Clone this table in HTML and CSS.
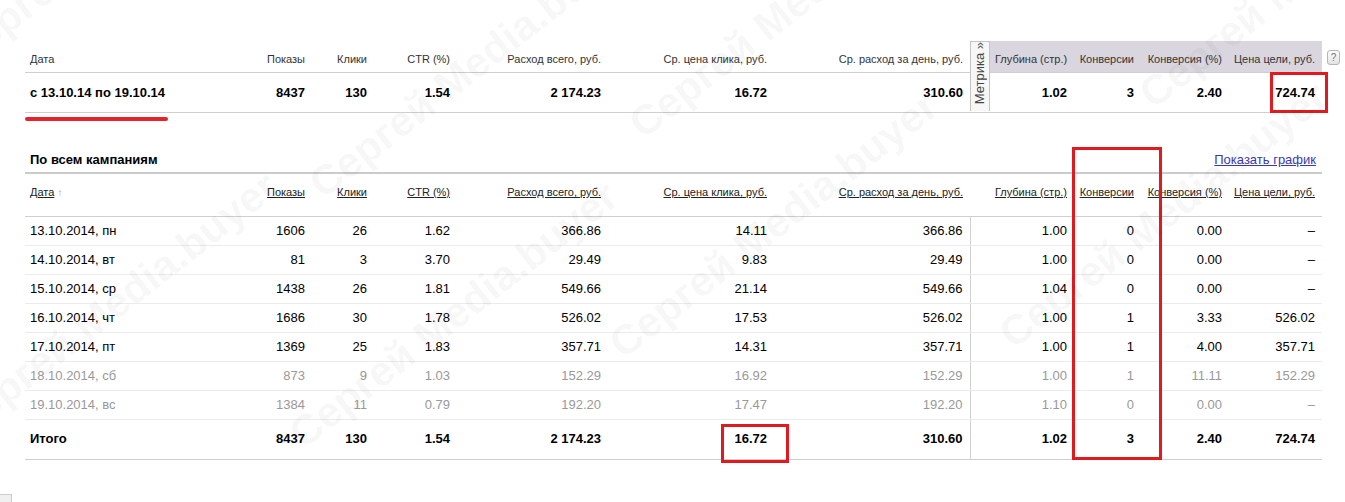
FILE: index.html
```html
<!DOCTYPE html>
<html lang="ru">
<head>
    <meta charset="UTF-8">
    <title>Статистика по дням</title>
    <link rel="stylesheet" href="styles.css">
</head>
<body>
<div class="page">
    <div class="summary">
        <table class="stat stat-top">
            <colgroup>
                <col class="c-date"><col class="c-shows"><col class="c-clicks"><col class="c-ctr">
                <col class="c-cost"><col class="c-cpc"><col class="c-daily"><col class="c-tab">
                <col class="c-depth-s"><col class="c-conv"><col class="c-convp"><col class="c-goal">
            </colgroup>
            <tbody>
            <tr class="head">
                <th class="left">Дата</th>
                <th>Показы</th>
                <th>Клики</th>
                <th>CTR (%)</th>
                <th>Расход всего, руб.</th>
                <th>Ср. цена клика, руб.</th>
                <th class="wide">Ср. расход за день, руб.</th>
                <td class="tab" rowspan="2"><div class="metrika"><span>Метрика »</span></div></td>
                <th class="metric">Глубина (стр.)</th>
                <th class="metric">Конверсии</th>
                <th class="metric">Конверсия (%)</th>
                <th class="metric last">Цена цели, руб.</th>
            </tr>
            <tr class="total">
                <td class="left">с 13.10.14 по 19.10.14</td>
                <td>8437</td>
                <td>130</td>
                <td>1.54</td>
                <td>2 174.23</td>
                <td>16.72</td>
                <td class="wide">310.60</td>
                <td>1.02</td>
                <td>3</td>
                <td>2.40</td>
                <td class="last">724.74</td>
            </tr>
            </tbody>
        </table>
        <span class="help">?</span>
    </div>
    <div class="underline"></div>

    <div class="section-head">
        <h2>По всем кампаниям</h2>
        <a href="#">Показать график</a>
    </div>

    <table class="stat stat-days">
        <colgroup>
            <col class="c-date"><col class="c-shows"><col class="c-clicks"><col class="c-ctr">
            <col class="c-cost"><col class="c-cpc"><col class="c-daily"><col class="c-depth">
            <col class="c-conv"><col class="c-convp"><col class="c-goal">
        </colgroup>
        <thead>
        <tr>
            <th class="left"><a href="#">Дата</a> <span class="sort">↑</span></th>
            <th><a href="#">Показы</a></th>
            <th><a href="#">Клики</a></th>
            <th><a href="#">CTR (%)</a></th>
            <th><a href="#">Расход всего, руб.</a></th>
            <th><a href="#">Ср. цена клика, руб.</a></th>
            <th class="wide"><a href="#">Ср. расход за день, руб.</a></th>
            <th><a href="#">Глубина (стр.)</a></th>
            <th><a href="#">Конверсии</a></th>
            <th><a href="#">Конверсия (%)</a></th>
            <th class="last"><a href="#">Цена цели, руб.</a></th>
        </tr>
        </thead>
        <tbody>
        <tr>
            <td class="left">13.10.2014, пн</td><td>1606</td><td>26</td><td>1.62</td><td>366.86</td><td>14.11</td>
            <td class="wide">366.86</td><td class="sep">1.00</td><td>0</td><td>0.00</td><td class="last">–</td>
        </tr>
        <tr>
            <td class="left">14.10.2014, вт</td><td>81</td><td>3</td><td>3.70</td><td>29.49</td><td>9.83</td>
            <td class="wide">29.49</td><td class="sep">1.00</td><td>0</td><td>0.00</td><td class="last">–</td>
        </tr>
        <tr>
            <td class="left">15.10.2014, ср</td><td>1438</td><td>26</td><td>1.81</td><td>549.66</td><td>21.14</td>
            <td class="wide">549.66</td><td class="sep">1.04</td><td>0</td><td>0.00</td><td class="last">–</td>
        </tr>
        <tr>
            <td class="left">16.10.2014, чт</td><td>1686</td><td>30</td><td>1.78</td><td>526.02</td><td>17.53</td>
            <td class="wide">526.02</td><td class="sep">1.00</td><td>1</td><td>3.33</td><td class="last">526.02</td>
        </tr>
        <tr>
            <td class="left">17.10.2014, пт</td><td>1369</td><td>25</td><td>1.83</td><td>357.71</td><td>14.31</td>
            <td class="wide">357.71</td><td class="sep">1.00</td><td>1</td><td>4.00</td><td class="last">357.71</td>
        </tr>
        <tr class="weekend">
            <td class="left">18.10.2014, сб</td><td>873</td><td>9</td><td>1.03</td><td>152.29</td><td>16.92</td>
            <td class="wide">152.29</td><td class="sep">1.00</td><td>1</td><td>11.11</td><td class="last">152.29</td>
        </tr>
        <tr class="weekend">
            <td class="left">19.10.2014, вс</td><td>1384</td><td>11</td><td>0.79</td><td>192.20</td><td>17.47</td>
            <td class="wide">192.20</td><td class="sep">1.10</td><td>0</td><td>0.00</td><td class="last">–</td>
        </tr>
        </tbody>
        <tfoot>
        <tr>
            <td class="left">Итого</td><td>8437</td><td>130</td><td>1.54</td><td>2 174.23</td><td>16.72</td>
            <td class="wide">310.60</td><td class="sep">1.02</td><td>3</td><td>2.40</td><td class="last">724.74</td>
        </tr>
        </tfoot>
    </table>
    <div class="corner"></div>

    <!-- пометки красным поверх таблицы -->
    <div class="mark mark-goal"></div>
    <div class="mark mark-conv"></div>
    <div class="mark mark-cpc"></div>

    <!-- водяной знак -->
    <div class="watermark">
        <span style="left:-60px;top:40px">Сергей Media.buyer</span>
        <span style="left:300px;top:170px">Сергей Media.buyer</span>
        <span style="left:620px;top:110px">Сергей Media.buyer</span>
        <span style="left:600px;top:330px">Сергей Media.buyer</span>
        <span style="left:990px;top:320px">Сергей Media.buyer</span>
        <span style="left:1130px;top:80px">Сергей Media.buyer</span>
        <span style="left:-60px;top:410px">Сергей Media.buyer</span>
        <span style="left:280px;top:420px">Сергей Media.buyer</span>
    </div>
</div>
</body>
</html>
```

FILE: styles.css
```css
* {
    margin: 0;
    padding: 0;
    box-sizing: border-box;
}

body {
    font-family: "Liberation Sans", Arial, sans-serif;
    font-size: 13px;
    color: #000;
    background: #fff;
    overflow: hidden;
}

.page {
    position: relative;
    width: 1345px;
    height: 502px;
    padding: 41px 0 0 25px;
    overflow: hidden;
}

/* общая таблица */
.stat {
    width: 1297px;
    border-collapse: collapse;
    table-layout: fixed;
}

.stat th,
.stat td {
    text-align: right;
    padding: 0 5px;
    white-space: nowrap;
}

.stat .left {
    text-align: left;
}

.stat .wide {
    padding-right: 7px;
}

.stat .last {
    padding-right: 7px;
}

.c-date { width: 215px; }
.c-shows { width: 70px; }
.c-clicks { width: 62px; }
.c-ctr { width: 83px; }
.c-cost { width: 151px; }
.c-cpc { width: 166px; }
.c-daily { width: 198px; }
.c-tab { width: 20px; }
.c-depth-s { width: 82px; }
.c-depth { width: 102px; }
.c-conv { width: 67px; }
.c-convp { width: 88px; }
.c-goal { width: 95px; }

/* верхняя сводка */
.summary {
    display: flex;
    align-items: flex-start;
}

.stat-top .head th {
    height: 31px;
    font-size: 11px;
    font-weight: normal;
    color: #333;
    line-height: 18px;
    padding-top: 9px;
    padding-bottom: 3px;
    border-bottom: 1px solid #cfcfcf;
}

.stat-top .head th.metric {
    background-color: #d9d6df;
}

.stat-top .total td {
    height: 40px;
    font-weight: bold;
    line-height: 19px;
    padding-top: 10px;
    padding-bottom: 10px;
    border-bottom: 1px solid #cfcfcf;
}

.stat-top td.tab {
    padding: 0;
    vertical-align: top;
    border-bottom: 1px solid #cfcfcf;
}

.metrika {
    height: 70px;
    display: flex;
    flex-direction: column;
    justify-content: flex-end;
    align-items: center;
    padding-bottom: 7px;
    background-color: #f7f7f7;
    border: 1px solid #c4c4c4;
    border-bottom: 0;
    color: #444;
    font-size: 13px;
    cursor: pointer;
}

.metrika span {
    writing-mode: vertical-rl;
    transform: rotate(180deg);
    line-height: 16px;
}

.help {
    display: inline-block;
    width: 13px;
    height: 15px;
    margin: 9px 0 0 5px;
    border: 1px solid #b5b5b5;
    border-radius: 3px;
    background: linear-gradient(#fdfdfd, #e2e2e2);
    color: #777;
    font-size: 10px;
    line-height: 13px;
    text-align: center;
}

.underline {
    width: 143px;
    height: 4px;
    margin-top: 4px;
    background-color: #e4232b;
    border-radius: 2px;
}

/* по всем кампаниям */
.section-head {
    width: 1297px;
    display: flex;
    justify-content: space-between;
    align-items: center;
    margin-top: 30px;
    padding: 0 6px 3px 5px;
    border-bottom: 2px solid #cbcbcb;
    line-height: 18px;
}

.section-head h2 {
    font-size: 13px;
    font-weight: bold;
}

.section-head a {
    color: #3a3aae;
    font-size: 13px;
}

.stat-days thead th {
    font-size: 11px;
    font-weight: normal;
    line-height: 18px;
    padding-top: 9px;
    padding-bottom: 14px;
    border-bottom: 1px solid #cfcfcf;
}

.stat-days thead a {
    color: #222;
}

.stat-days .sort {
    color: #999;
    font-size: 10px;
}

.stat-days tbody td {
    line-height: 18px;
    padding-top: 5px;
    padding-bottom: 5px;
    border-bottom: 1px solid #ebebeb;
}

.stat-days tbody tr.weekend td {
    color: #999;
}

.stat-days tfoot td {
    font-weight: bold;
    line-height: 18px;
    padding-top: 10px;
    padding-bottom: 11px;
    border-bottom: 1px solid #cfcfcf;
}

.stat-days td.sep {
    border-left: 1px solid #d2d2d2;
}

.corner {
    width: 12px;
    height: 9px;
    margin: 34px 0 0 -25px;
    border: 1px solid #ccc;
    border-left: 0;
    border-bottom: 0;
    background-color: #f0f0f0;
}

/* красные пометки */
.mark {
    position: absolute;
    border: 3px solid #e01a1f;
}

.mark-goal {
    left: 1270px;
    top: 72px;
    width: 58px;
    height: 41px;
}

.mark-conv {
    left: 1072px;
    top: 147px;
    width: 90px;
    height: 313px;
}

.mark-cpc {
    left: 721px;
    top: 424px;
    width: 68px;
    height: 39px;
}

/* водяной знак */
.watermark {
    position: absolute;
    left: 0;
    top: 0;
    width: 1345px;
    height: 502px;
    overflow: hidden;
    pointer-events: none;
}

.watermark span {
    position: absolute;
    font-size: 42px;
    font-weight: bold;
    white-space: nowrap;
    color: rgba(0, 0, 0, 0.045);
    transform: rotate(-38deg);
    transform-origin: left top;
}
```
